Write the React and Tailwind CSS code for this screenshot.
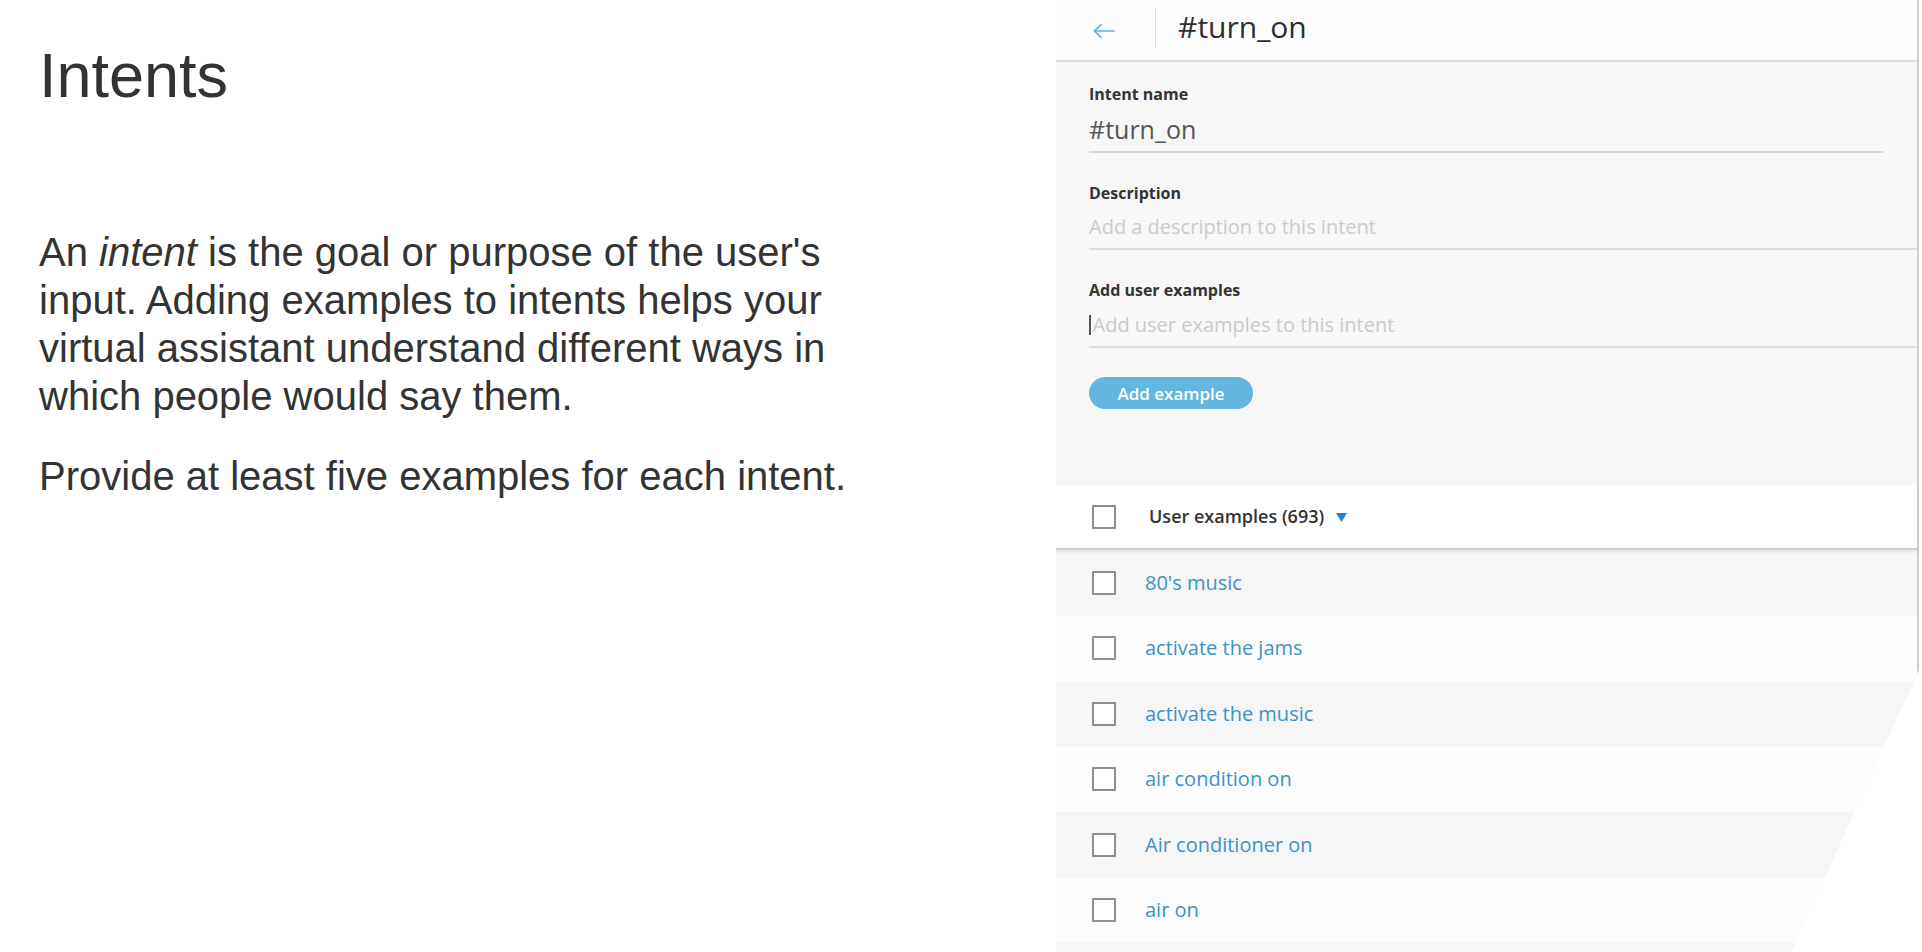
const examples = [
  "80's music",
  "activate the jams",
  "activate the music",
  "air condition on",
  "Air conditioner on",
  "air on",
];

function Checkbox() {
  return <span className="block w-[24px] h-[24px] border-2 border-[#8e8e8e] bg-white rounded-[1px] shrink-0" />;
}

function Field({ label, children, className = "" }) {
  return (
    <div className={className}>
      <div className="text-[16px] leading-[20px] font-bold text-[#333]">{label}</div>
      {children}
    </div>
  );
}

export default function App() {
  return (
    <div className="flex w-[1922px] h-[952px] bg-white overflow-hidden">
      <div
        className="w-[1056px] shrink-0 pl-[39px] pt-[44px] text-[#333]"
        style={{ fontFamily: '"Liberation Sans", Arial, sans-serif' }}
      >
        <h1 className="text-[63px] leading-none font-normal">Intents</h1>
        <div className="mt-[121px] w-[830px] text-[40px] leading-[48px]">
          <p>
            An <i>intent</i> is the goal or purpose of the user's input. Adding examples to intents helps your
            virtual assistant understand different ways in which people would say them.
          </p>
          <p className="mt-[32px]">Provide at least five examples for each intent.</p>
        </div>
      </div>

      <div
        className="w-[863px] shrink-0 h-[952px] flex flex-col border-r-2 border-[#cfcfcf] [clip-path:polygon(0_0,100%_0,100%_670px,735px_952px,0_952px)]"
        style={{ fontFamily: '"Open Sans", "Noto Sans", sans-serif' }}
      >
        {/* header */}
        <div className="h-[62px] shrink-0 flex items-center pb-[4px] pl-[37px] bg-[#fcfcfc] border-b-2 border-[#dedede]">
          <svg width="22" height="16" viewBox="0 0 22 16" className="mt-[6px]" fill="none" stroke="#5aaddc" strokeWidth="1.6" strokeLinecap="round" strokeLinejoin="round">
            <path d="M21 8H1.5" />
            <path d="M8 1.5L1.5 8L8 14.5" />
          </svg>
          <span className="ml-[40px] w-px h-[40px] bg-[#dcdcdc]" />
          <span className="ml-[22px] mb-[3px] text-[30px] leading-[40px] text-[#2e2e2e]">#turn_on</span>
        </div>

        {/* form */}
        <div className="h-[423px] shrink-0 bg-[#f7f7f7] pl-[33px] pt-[22px]">
          <Field label="Intent name" className="mr-[34px]">
            <div className="mt-[9px] text-[25px] leading-[32px] text-[#555] pb-[6px] border-b-2 border-[#d6d6d6]">
              #turn_on
            </div>
          </Field>
          <Field label="Description" className="mt-[30px]">
            <div className="mt-[10px] text-[20px] leading-[28px] text-[#cacaca] pb-[7px] border-b-2 border-[#dcdcdc]">
              Add a description to this intent
            </div>
          </Field>
          <Field label="Add user examples" className="mt-[30px]">
            <div className="mt-[11px] flex items-center text-[20px] leading-[28px] text-[#cacaca] pb-[7px] border-b-2 border-[#dcdcdc]">
              <span className="w-[1.5px] h-[20px] bg-[#555]" />
              <span className="ml-[2px]">Add user examples to this intent</span>
            </div>
          </Field>
          <button className="mt-[29px] w-[164px] h-[32px] rounded-full bg-[#62b6e0] text-white text-[17px] font-semibold leading-none">
            Add example
          </button>
        </div>

        {/* list header */}
        <div className="relative z-10 h-[65px] shrink-0 flex items-center pl-[36px] bg-white border-b-2 border-[#cfcfcf] shadow-[0_2px_3px_rgba(0,0,0,0.08)]">
          <Checkbox />
          <span className="ml-[33px] text-[18px] font-semibold text-[#333]">User examples (693)</span>
          <svg width="11" height="9" viewBox="0 0 11 9" className="ml-[12px] mt-[2px]">
            <path d="M0 0H11L5.5 9Z" fill="#1f86c8" />
          </svg>
        </div>

        {/* rows */}
        {examples.map((text, i) => (
          <div
            key={text}
            className={`h-[65.5px] shrink-0 flex items-center pl-[36px] ${i % 2 === 0 ? "bg-[#f6f6f6]" : "bg-[#fdfdfd]"}`}
          >
            <Checkbox />
            <span className="ml-[29px] text-[20px] leading-[28px] text-[#3b92c8]">{text}</span>
          </div>
        ))}
        <div className="h-[65.5px] shrink-0 bg-[#f6f6f6]" />
      </div>
    </div>
  );
}
